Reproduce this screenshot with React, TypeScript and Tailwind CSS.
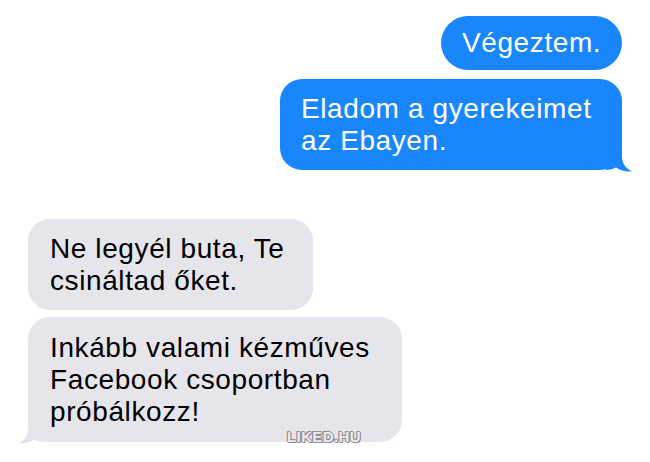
import React from "react";

type Side = "me" | "them";

function Tail({ side, color }: { side: Side; color: string }) {
  // little curled horn under the last bubble of a group
  if (side === "me") {
    return (
      <svg
        className="absolute -right-[10px] -bottom-[2px]"
        width="26"
        height="24"
        viewBox="0 0 26 24"
      >
        <path
          d="M0,0 H16 V8 C16,15 19,20 26,23.5 C20,24 14,22.5 10,19.5 C7,21 4,22 0,22 Z"
          fill={color}
        />
      </svg>
    );
  }
  return (
    <svg
      className="absolute -left-[10px] -bottom-[2px]"
      width="26"
      height="24"
      viewBox="0 0 26 24"
    >
      <path
        d="M26,0 H10 V8 C10,15 7,20 0,23.5 C6,24 12,22.5 16,19.5 C19,21 22,22 26,22 Z"
        fill={color}
      />
    </svg>
  );
}

function Bubble({
  side,
  lines,
  tail,
  className = "",
}: {
  side: Side;
  lines: string[];
  tail?: boolean;
  className?: string;
}) {
  const me = side === "me";
  return (
    <div
      className={`relative whitespace-nowrap rounded-[22px] text-[28px] leading-[32px] tracking-[0.6px] ${
        me ? "bg-[#1a86fb] text-white" : "bg-[#e6e5eb] text-black"
      } ${className}`}
    >
      {tail && <Tail side={side} color={me ? "#1a86fb" : "#e6e5eb"} />}
      <div className="relative">
        {lines.map((l, i) => (
          <div key={i}>{l}</div>
        ))}
      </div>
    </div>
  );
}

export default function App() {
  return (
    <div
      className="relative h-[462px] w-[650px] overflow-hidden bg-white"
      style={{ fontFamily: '"Liberation Sans", Arial, Helvetica, sans-serif' }}
    >
      <div className="flex flex-col items-end gap-[9px] pt-[16px] pr-[28px]">
        <Bubble side="me" lines={["Végeztem."]} className="w-[181px] rounded-[27px] py-[11px] pl-[21px]" />
        <Bubble
          side="me"
          tail
          lines={["Eladom a gyerekeimet", "az Ebayen."]}
          className="w-[342px] py-[13.5px] pl-[21px]"
        />
      </div>

      <div className="flex flex-col items-start gap-[7px] pt-[49px] pl-[28px]">
        <Bubble
          side="them"
          lines={["Ne legyél buta, Te", "csináltad őket."]}
          className="w-[285px] py-[13.5px] pl-[22px]"
        />
        <Bubble
          side="them"
          tail
          lines={["Inkább valami kézműves", "Facebook csoportban", "próbálkozz!"]}
          className="w-[374px] py-[14.5px] pl-[22px]"
        />
      </div>

      {/* site watermark */}
      <div
        className="absolute left-[287px] top-[429px] text-[15px] font-bold leading-none tracking-[0.4px] text-[#ececf0]"
        style={{
          textShadow:
            "1px 0 0 #8c8c92, -1px 0 0 #8c8c92, 0 1px 0 #8c8c92, 0 -1px 0 #8c8c92, 1px 1px 0 #8c8c92, -1px -1px 0 #8c8c92",
        }}
      >
        LIKED.HU
      </div>
    </div>
  );
}
